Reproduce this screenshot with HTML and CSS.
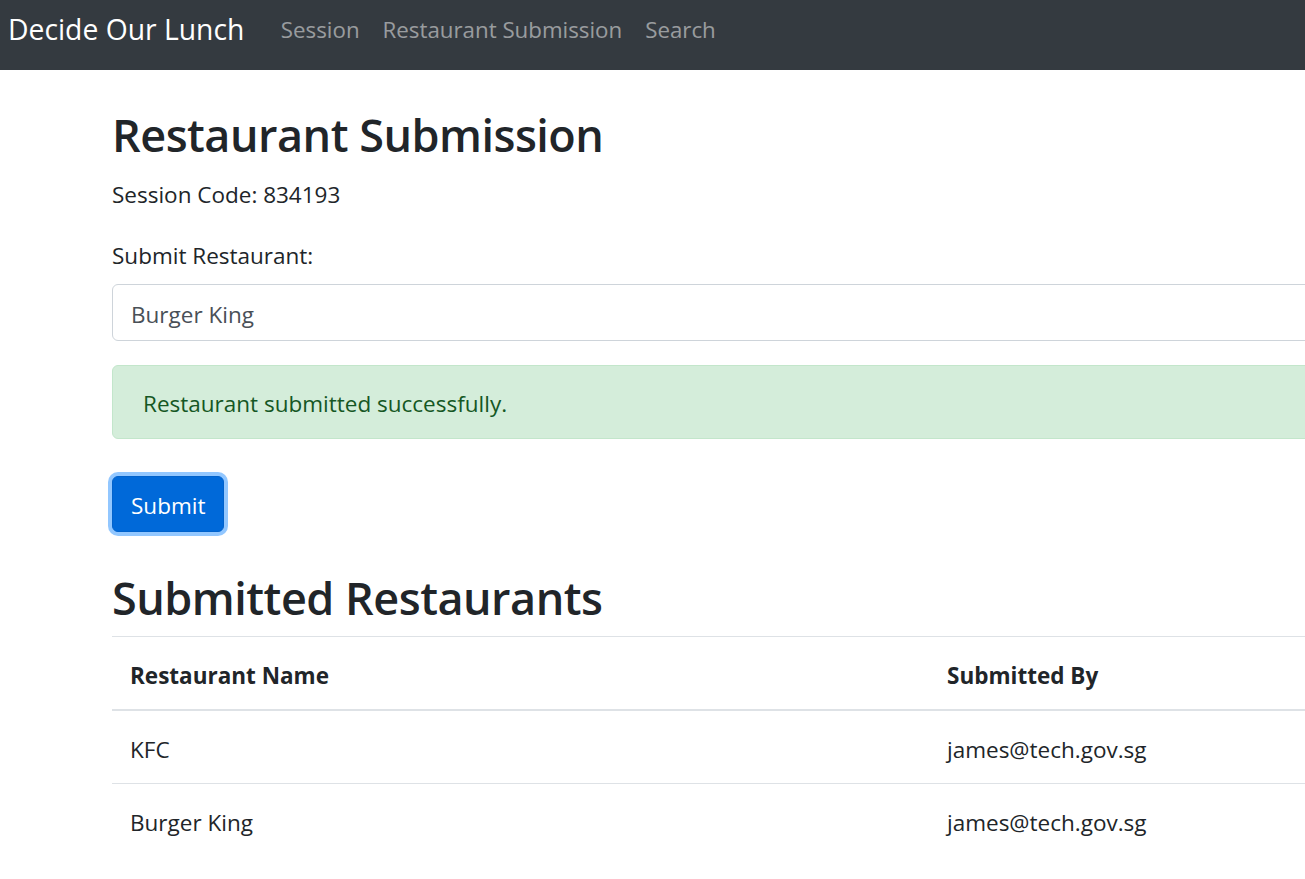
FILE: index.html
```html
<!DOCTYPE html>
<html lang="en">
<head>
<meta charset="utf-8">
<title>Decide Our Lunch</title>
<link rel="stylesheet" href="styles.css">
</head>
<body>
<nav class="navbar">
  <a class="brand" href="#">Decide Our Lunch</a>
  <ul class="nav">
    <li><a class="nav-link" href="#">Session</a></li>
    <li><a class="nav-link" href="#">Restaurant Submission</a></li>
    <li><a class="nav-link" href="#">Search</a></li>
  </ul>
</nav>
<main class="page">
  <h1 class="title">Restaurant Submission</h1>
  <p class="session">Session Code: 834193</p>
  <form class="form">
    <label class="label" for="restaurant">Submit Restaurant:</label>
    <input class="input" id="restaurant" type="text" value="Burger King">
    <div class="alert">Restaurant submitted successfully.</div>
    <button class="btn" type="button">Submit</button>
  </form>
  <h2 class="title title-sub">Submitted Restaurants</h2>
  <table class="table">
    <thead>
      <tr><th class="col-name">Restaurant Name</th><th>Submitted By</th></tr>
    </thead>
    <tbody>
      <tr><td>KFC</td><td>james@tech.gov.sg</td></tr>
      <tr><td>Burger King</td><td>james@tech.gov.sg</td></tr>
    </tbody>
  </table>
</main>
</body>
</html>
```
FILE: styles.css
```css
html, body {
  margin: 0;
  padding: 0;
  overflow: hidden;
  background: #fff;
}
body {
  font-family: "Open Sans", "Noto Sans", sans-serif;
  color: #212529;
  font-size: 22.5px;
  line-height: 36px;
}
.navbar {
  height: 70px;
  box-sizing: border-box;
  background: #343a40;
  display: flex;
  align-items: flex-start;
  padding: 7px 0 0 8px;
}
.brand {
  color: #fff;
  text-decoration: none;
  font-size: 28.3px;
  line-height: 45px;
  margin-right: 25px;
  white-space: nowrap;
}
.nav {
  display: flex;
  list-style: none;
  margin: 0;
  padding: 0;
}
.nav-link {
  display: block;
  padding: 0 11.5px;
  color: rgba(255, 255, 255, 0.5);
  text-decoration: none;
  font-size: 22.3px;
  line-height: 45px;
  white-space: nowrap;
}
.page {
  width: 1500px;
  padding: 37px 0 0 112px;
}
.title {
  margin: 0;
  font-size: 45px;
  line-height: 55px;
  font-weight: 600;
  letter-spacing: -0.5px;
  white-space: nowrap;
}
.session {
  margin: 15px 0 25px;
}
.form {
  display: flex;
  flex-direction: column;
  align-items: flex-start;
}
.label {
  margin-bottom: 10px;
}
.input {
  box-sizing: border-box;
  width: 100%;
  height: 57px;
  padding: 11px 18px 7px;
  font: inherit;
  color: #495057;
  border: 1px solid #ced4da;
  border-radius: 6px;
  background: #fff;
  outline: none;
}
.alert {
  box-sizing: border-box;
  width: 100%;
  margin-top: 24px;
  padding: 20px 30px 16px;
  color: #155724;
  background: #d4edda;
  border: 1px solid #c3e6cb;
  border-radius: 6px;
}
.btn {
  margin-top: 37px;
  height: 56px;
  padding: 11px 18px 7px;
  font: inherit;
  color: #fff;
  background: #0069d9;
  border: 1px solid #0062cc;
  border-radius: 6px;
  box-shadow: 0 0 0 4px rgba(38, 143, 255, 0.5);
}
.title-sub {
  margin-top: 38px;
}
.table {
  margin-top: 11px;
  width: 100%;
  border-collapse: collapse;
  table-layout: fixed;
}
.table th, .table td {
  text-align: left;
  padding: 21px 18px 15px;
  border-top: 1px solid #dee2e6;
  white-space: nowrap;
}
.table th {
  font-weight: 700;
  border-bottom: 2px solid #dee2e6;
}
.col-name {
  width: 781px;
}
```
